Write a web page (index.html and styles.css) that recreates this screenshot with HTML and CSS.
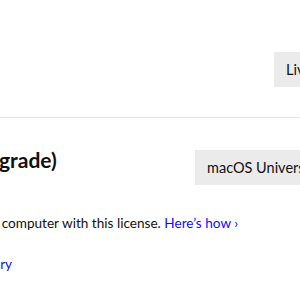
FILE: index.html
```html
<!DOCTYPE html>
<html lang="en">
<head>
    <meta charset="UTF-8">
    <meta name="viewport" content="width=device-width, initial-scale=1.0">
    <title>License</title>
    <link rel="stylesheet" href="styles.css">
</head>

<body>
    <div class="page">
        <div class="top">
            <button class="btn btn-live">Live Preview</button>
        </div>

        <div class="product">
            <h2 class="title">Final Cut Pro (Upgrade)</h2>
            <button class="btn btn-build">macOS Universal Binary</button>
        </div>

        <p class="note">Install on one more computer with this license. <a href="#">Here’s how ›</a></p>
        <p class="history"><a href="#">View Purchase History</a></p>
    </div>
</body>
</html>
```

FILE: styles.css
```css
body {
    font-family: 'Lato', sans-serif;
    margin: 0;
    padding: 0;
    background-color: #fff;
    color: #111;
    overflow: hidden;
}

.page {
    width: 700px;
    margin-left: -200px;
}

.top {
    height: 117px;
    border-bottom: 1px solid #e3e3e3;
    display: flex;
    align-items: flex-start;
}

.btn {
    font-family: 'Lato', sans-serif;
    font-size: 14.5px;
    color: #111;
    background-color: #ebebeb;
    border: none;
    border-radius: 0;
    height: 35px;
    padding: 0 12px;
    white-space: nowrap;
}

.btn-live {
    margin-top: 52px;
    margin-left: 474px;
}

.product {
    display: flex;
    align-items: flex-start;
    padding-top: 28px;
}

.title {
    font-size: 21px;
    font-weight: 700;
    margin: 0;
    width: 395px;
    white-space: nowrap;
    line-height: 28px;
    text-indent: 40px;
}

.btn-build {
    margin-top: 4px;
}

.note {
    font-size: 13.6px;
    line-height: 20px;
    margin: 28px 0 0;
    white-space: nowrap;
    text-indent: 84px;
}

a {
    color: #0d0dff;
    text-decoration: none;
}

.history {
    font-size: 13.6px;
    line-height: 20px;
    margin: 21px 0 0;
    white-space: nowrap;
    text-indent: 77px;
}
```
